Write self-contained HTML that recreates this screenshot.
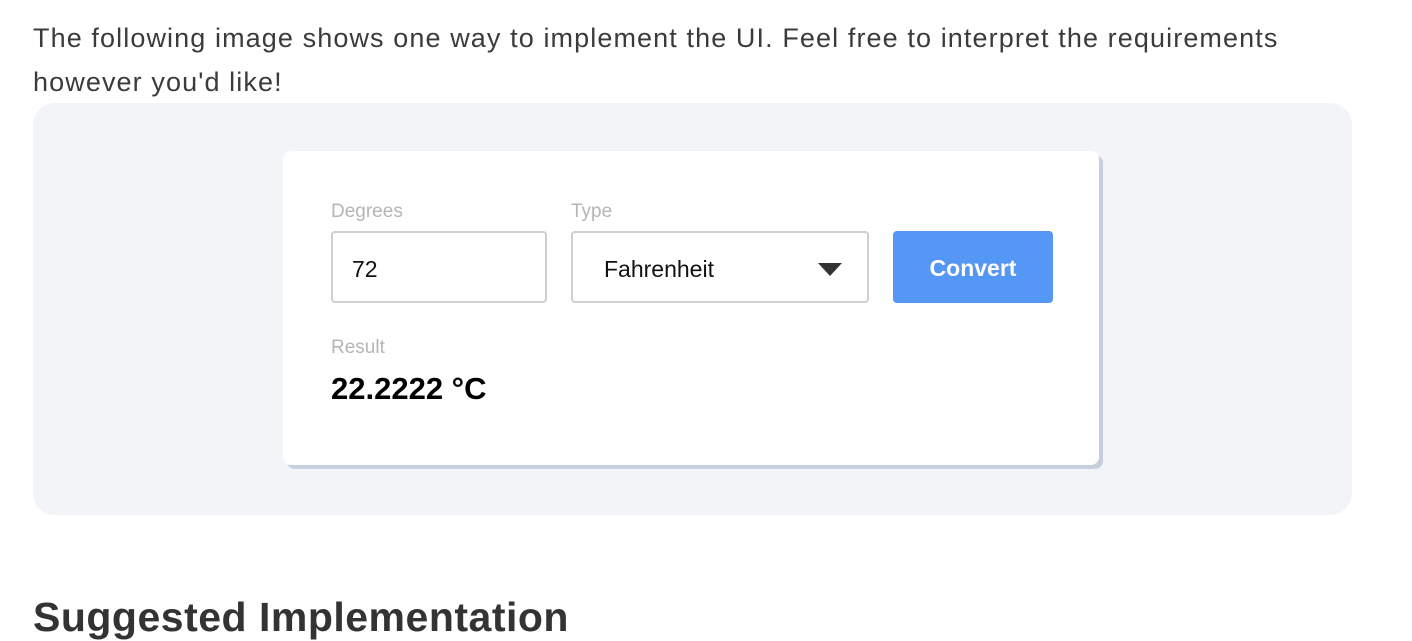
<!DOCTYPE html>
<html><head><style>
body{margin:0;background:#fff;font-family:"Liberation Sans",sans-serif;width:1412px;height:640px;overflow:hidden;position:relative;color:#3b3b3b}
.p{position:absolute;left:33px;top:16px;font-size:27px;line-height:44px;width:1300px;letter-spacing:1.1px}
.box{position:absolute;left:33px;top:103px;width:1319px;height:412px;background:#f3f4f8;border-radius:22px}
.card{position:absolute;left:283px;top:151px;width:816px;height:314px;background:#fff;border-radius:8px;box-shadow:4px 4px 0 #c5cfdd}
.lab{position:absolute;font-size:19px;color:#b5b5b5}
.in{position:absolute;top:231px;border:2px solid #cfcfcf;border-radius:4px;box-sizing:border-box;background:#fff;font-size:23px;color:#111}
.btn{position:absolute;left:893px;top:231px;width:160px;height:72px;background:#5597f5;border-radius:4px;color:#fff;font-weight:bold;font-size:23px;text-align:center;line-height:74px}
h2{position:absolute;left:33px;top:594px;margin:0;font-size:41px;color:#333;font-weight:bold;letter-spacing:0.5px}
</style></head><body>
<div class="p">The following image shows one way to implement the UI. Feel free to interpret the requirements however you'd like!</div>
<div class="box"></div>
<div class="card"></div>
<div class="lab" style="left:331px;top:201px">Degrees</div>
<div class="lab" style="left:571px;top:201px">Type</div>
<div class="in" style="left:331px;width:216px;padding-left:19px;height:72px;line-height:72px">72</div>
<div class="in" style="left:571px;width:298px;padding-left:31px;height:72px;line-height:72px">Fahrenheit
<svg style="position:absolute;left:245px;top:30px" width="24" height="14"><path d="M0 0H24L12 13Z" fill="#333"/></svg></div>
<div class="btn">Convert</div>
<div class="lab" style="left:331px;top:337px">Result</div>
<div style="position:absolute;left:331px;top:371px;font-size:31px;font-weight:bold;color:#000">22.2222 °C</div>
<h2>Suggested Implementation</h2>
</body></html>
